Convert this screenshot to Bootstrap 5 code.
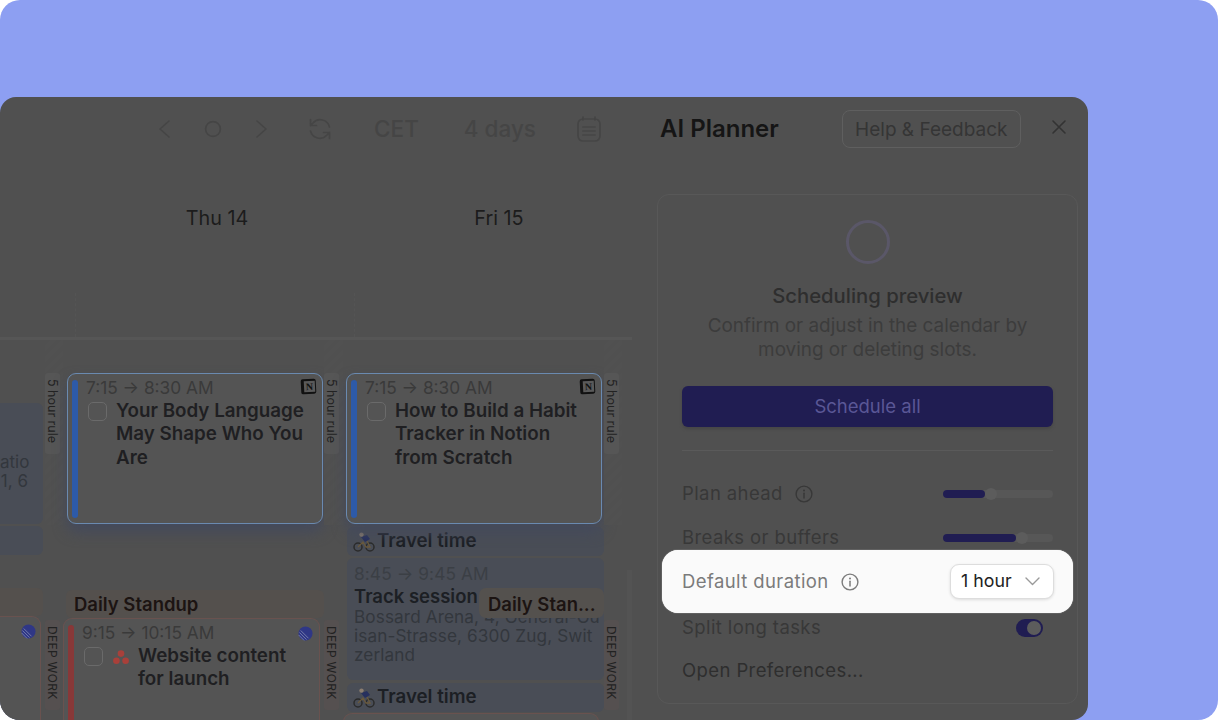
<!DOCTYPE html>
<html lang="en">
<head>
  <meta charset="UTF-8" />
  <title>AI Planner</title>
  <link href="https://cdn.jsdelivr.net/npm/bootstrap@5.3.3/dist/css/bootstrap.min.css" rel="stylesheet">
  <style>
    body{margin:0;background:#fff;font-family:"Inter","Liberation Sans",sans-serif;color:#1f1f1f;overflow:hidden}
    .frame{width:1218px;height:720px;background:#8d9ff2;border-radius:20px;padding-top:97px;overflow:hidden}
    .win{width:1088px;height:623px;background:#505050;border-radius:16px 16px 16px 0;overflow:hidden;display:flex}

    /* ---------- calendar side ---------- */
    .cal{width:632px;flex:none;position:relative}
    .topbar{height:64px;color:#454545}
    .topbar svg{display:block;flex:none}
    .tb-txt{font-size:22.5px;font-weight:500;line-height:1}
    .dayrow{height:66px;padding-top:48px;font-size:19.8px;line-height:1;color:#1c1c1c}
    .dayrow span{position:absolute;transform:translateX(-50%)}
    .allday{height:113px;border-bottom:3px solid #565656;display:flex}
    .dash{width:0;height:44px;margin-top:66px;border-left:1px dashed #545454}
    .grid-cols{display:grid;grid-template-columns:45px 18px 261px 19px 261px 18px 10px;height:380px}
    .cell{display:flex;flex-direction:column;min-width:0;position:relative}
    .strip{padding-top:33px;background:repeating-linear-gradient(135deg,#505050 0 4px,#515151 4px 8px) no-repeat 0 0/100% 185px}
    .tag{width:15px;writing-mode:vertical-rl;background:#565656;font-size:12.5px;line-height:15px;color:#222;border-radius:3px;white-space:nowrap;padding-top:6px;text-align:left}
    .tag.rule{height:81px}
    .tag.deep{height:90px;margin-top:166px;font-size:12px;letter-spacing:.3px;background:#555050}

    .ev-blue{background:#494d56;border-radius:6px}
    .ev-tan{background:#54504d;border-radius:6px;font-size:18.5px;font-weight:600;line-height:28px;height:28px;color:#1c1412;padding-left:8px;white-space:nowrap}
    .task{background:#545454;position:relative;border-radius:9px;padding-left:18px}
    .task.bluecard{border:1.5px solid #6a8ab0;height:151px;box-shadow:0 8px 14px #444a5c}
    .task.redcard{border:1px solid #69524f;border-bottom:0;border-radius:9px 9px 0 0;flex:1}
    .bar-side{position:absolute;left:4px;top:6px;bottom:5px;width:6px;border-radius:3px;background:#2d5aa8}
    .redcard .bar-side{background:#883838;bottom:-5px}
    .t-time{font-size:17.3px;line-height:20px;color:#3a3a3a;padding-top:4px;white-space:nowrap}
    .t-row{display:flex;margin-top:1px}
    .chk{width:19px;height:19px;flex:none;border:1.5px solid #6a6a6a;border-radius:5px;margin:3px 9px 0 2px}
    .t-title{font-size:18.8px;font-weight:600;line-height:23.4px;color:#1f1f22;max-width:195px}
    .redcard .t-title{max-width:170px}
    .t-corner{position:absolute;right:6px;top:5px}
    .notion{width:15px;height:15px;background:#5a5a5a;border:solid #111;border-width:2px 1px 2px 3px;border-radius:2px;font:700 10px/11px "Liberation Serif",serif;text-align:center;color:#111;transform:rotate(-3deg)}
    .travel{height:29px;font-size:18.7px;font-weight:600;display:flex;align-items:center;gap:2px;padding-left:6px;color:#1c1f24;white-space:nowrap}
    .track{height:122px;padding:6px 7px;margin-top:2px;margin-bottom:3px;font-size:17.2px;letter-spacing:.1px;line-height:19.2px;color:#33373d;white-space:nowrap}
    .track .t-time{padding:0 0 1px;color:#3b3f45}
    .track b{display:block;font-size:18.5px;letter-spacing:0;line-height:22px;font-weight:600;color:#1c1f24}
    .pop-tan{position:absolute;left:136px;top:248px;width:125px;height:30px;background:#54514e;border-radius:7px;padding-left:9px;font-size:18.5px;font-weight:600;line-height:32px;color:#1c1412;white-space:nowrap}
    .leftcut{margin-right:1px}
    .scrollbit{position:absolute;right:0;top:473px;bottom:0;width:5px;background:#535353}

    /* ---------- planner side ---------- */
    .side{width:456px;flex:none;padding-left:25px}
    .side-head{height:64px}
    .side-head h1{font-size:24px;font-weight:600;margin:0;line-height:1;color:#151515}
    .help{font-size:19px;line-height:1;font-weight:400;color:#353535;border:1.5px solid #5f5f5f;border-radius:8px;padding:8px 12px;height:38px;width:179px;white-space:nowrap;margin-left:63px;background:transparent;display:flex;align-items:center;justify-content:center}
    .closex{margin:0 auto 4px 30px}
    .planel{width:421px;height:510px;margin-top:33px;background:transparent;border:1px solid #585858;border-radius:12px;padding:0 24px}
    .ring{width:44px;height:44px;border-radius:50%;border:3.5px solid #5a5768;margin:25px auto 0}
    .pv-title{font-size:20.3px;font-weight:500;line-height:24px;margin-top:20px;color:#2e2e2e}
    .pv-desc{font-size:18.9px;line-height:24.2px;color:#3c3c3c;margin-top:6px;margin-inline:-10px}
    .sched{background:#201d52;border:0;color:#5a5796;font-size:18.5px;height:41px;margin-top:24px;border-radius:6px;box-shadow:0 2px 3px #464646;padding:0}
    .rule-h{border-top:1px solid #5a5a5a;margin:23px 0 20px}
    .opt{height:44.3px;font-size:18.5px;letter-spacing:.4px;color:#383838}
    .opt svg{display:block;flex:none}
    .sl{width:110px;height:8px;background:#575757;border-radius:4px;position:relative;flex:none}
    .sl i{display:block;height:8px;background:#201d52;border-radius:4px}
    .sl u{position:absolute;top:-2px;width:12px;height:12px;border-radius:50%;background:#5c5c5c}
    .hilite{position:relative;z-index:2;margin:-10px -20px;height:63px;padding:0 19px 0 20px;background:#fafafa;border-radius:16px;color:#7b7b7b;box-shadow:0 0 1px #fff}
    .pick{width:104px;height:35px;background:#fff;border:1.5px solid #ddd;border-radius:9px;box-shadow:0 1px 3px rgba(0,0,0,.12);color:#222;font-size:17.8px;letter-spacing:0;padding:0 13px 0 10px;white-space:nowrap}
    .toggle{width:27px;height:18px;border-radius:9px;background:#201d52;padding:2px;margin-right:10px;display:flex;justify-content:flex-end}
    .toggle i{width:14px;height:14px;border-radius:50%;background:#5c5c5c;display:block}
  </style>
</head>
<body>
<svg width="0" height="0" class="d-block">
  <symbol id="ico-info" viewBox="0 0 18 18"><circle cx="9" cy="9" r="7.9" fill="none" stroke="currentColor" stroke-width="1.4"/><circle cx="9" cy="5.6" r="1" fill="currentColor"/><path d="M9 8.2v4.8" stroke="currentColor" stroke-width="1.5" stroke-linecap="round"/></symbol>
  <symbol id="ico-linear" viewBox="0 0 16 16"><circle cx="8" cy="8" r="7.5" fill="#2f3786"/><path d="M.6 9.5l5.9 5.9M1.5 6.9l7.6 7.6M2.9 4.8l8.3 8.3" stroke="#7f86b0" stroke-width=".9"/></symbol>
  <symbol id="ico-bike" viewBox="0 0 22 20"><circle cx="5" cy="15" r="4" fill="none" stroke="#2b2b2b" stroke-width="1.5"/><circle cx="17" cy="15" r="4" fill="none" stroke="#2b2b2b" stroke-width="1.5"/><path d="M5 15l5-5 3 5h4l-3-6" fill="none" stroke="#6b5a3c" stroke-width="1.3"/><path d="M8 5l6-2 3 4-5 3z" fill="#27305e"/><circle cx="8.5" cy="2.6" r="2.2" fill="#8b7d70"/></symbol>
</svg>
<div class="frame">
  <div class="win">
    <!-- Calendar -->
    <section class="cal">
      <div class="topbar d-flex align-items-center">
        <svg class="ms-auto" width="14" height="20" viewBox="0 0 14 20" style="margin-right:33px"><path d="M12 2L3 10l9 8" fill="none" stroke="currentColor" stroke-width="1.6" stroke-linecap="round" stroke-linejoin="round"/></svg>
        <svg width="18" height="18" viewBox="0 0 18 18" style="margin-right:33px"><circle cx="9" cy="9" r="7.4" fill="none" stroke="currentColor" stroke-width="1.7"/></svg>
        <svg width="14" height="20" viewBox="0 0 14 20" style="margin-right:39px"><path d="M2 2l9 8-9 8" fill="none" stroke="currentColor" stroke-width="1.6" stroke-linecap="round" stroke-linejoin="round"/></svg>
        <svg width="24" height="24" viewBox="0 0 24 24" style="margin-right:42px"><path d="M21.5 10A9.6 9.6 0 0 0 5 6L2.5 8.6M2.5 2.5v6h6M2.5 14A9.6 9.6 0 0 0 19 18l2.5-2.6M21.5 21.5v-6h-6" fill="none" stroke="currentColor" stroke-width="1.7" stroke-linecap="round" stroke-linejoin="round"/></svg>
        <span class="tb-txt" style="margin-right:45px">CET</span>
        <span class="tb-txt" style="margin-right:40px">4 days</span>
        <svg width="26" height="28" viewBox="0 0 26 28" style="margin-right:30px"><rect x="2" y="4" width="22" height="22" rx="5" fill="none" stroke="currentColor" stroke-width="1.7"/><path d="M7 2v3M19 2v3M7 12h12M7 16h12M7 20h12" stroke="currentColor" stroke-width="1.7" stroke-linecap="round"/></svg>
      </div>
      <div class="dayrow"><span style="left:217px">Thu 14</span><span style="left:499px">Fri 15</span></div>
      <div class="allday"><div class="dash" style="margin-left:75px"></div><div class="dash" style="margin-left:278px"></div></div>

      <div class="grid-cols">
        <!-- partial Wed column -->
        <div class="cell leftcut text-end">
          <div class="ev-blue" style="height:121px;margin-top:63px;margin-right:1px;border-radius:0 6px 6px 0;font-size:17px;line-height:19px;color:#33373d;padding:50px 15px 0 0">atio<br>1, 6</div>
          <div class="ev-blue" style="height:29px;margin-top:2px;margin-right:1px;border-radius:0 6px 6px 0"></div>
          <div class="ev-tan" style="margin-top:33px;border-radius:0 6px 6px 0;margin-right:1px"></div>
          <div class="task redcard" style="border-left:0;border-radius:0 9px 0 0;margin-right:3px"><svg class="t-corner" width="15" height="15" style="right:4px;top:7px"><use href="#ico-linear"/></svg></div>
        </div>
        <div class="cell strip"><div class="tag rule">5 hour rule</div><div class="tag deep">DEEP WORK</div></div>

        <!-- Thu 14 -->
        <div class="cell">
          <div class="task bluecard" style="margin:33px 1px 0 4px">
            <span class="bar-side"></span>
            <div class="t-corner notion">N</div>
            <div class="t-time">7:15 → 8:30 AM</div>
            <div class="t-row"><span class="chk"></span><div class="t-title">Your Body Language May Shape Who You Are</div></div>
          </div>
          <div class="ev-tan" style="margin:66px 0 0 3px">Daily Standup</div>
          <div class="task redcard" style="margin-right:4px">
            <span class="bar-side"></span>
            <svg class="t-corner" width="15" height="15" style="top:7px"><use href="#ico-linear"/></svg>
            <div class="t-time">9:15 → 10:15 AM</div>
            <div class="t-row">
              <span class="chk"></span>
              <svg width="16" height="15" viewBox="0 0 16 15" style="flex:none;margin:6px 9px 0 1px"><circle cx="8" cy="3.6" r="3.3" fill="#a8403a"/><circle cx="3.4" cy="10.8" r="3.3" fill="#a8403a"/><circle cx="12.6" cy="10.8" r="3.3" fill="#a8403a"/></svg>
              <div class="t-title">Website content for launch</div>
            </div>
          </div>
        </div>
        <div class="cell strip"><div class="tag rule">5 hour rule</div><div class="tag deep">DEEP WORK</div></div>

        <!-- Fri 15 -->
        <div class="cell">
          <div class="task bluecard" style="margin:33px 2px 0 3px">
            <span class="bar-side"></span>
            <div class="t-corner notion">N</div>
            <div class="t-time">7:15 → 8:30 AM</div>
            <div class="t-row"><span class="chk"></span><div class="t-title">How to Build a Habit Tracker in Notion from Scratch</div></div>
          </div>
          <div class="ev-blue travel" style="margin:3px 0 0 4px"><svg width="22" height="20"><use href="#ico-bike"/></svg>Travel time</div>
          <div class="ev-blue track" style="margin-left:4px">
            <div class="t-time">8:45 → 9:45 AM</div>
            <b>Track session</b>
            Bossard Arena, 4, General-Gu<br>isan-Strasse, 6300 Zug, Swit<br>zerland
          </div>
          <div class="ev-blue travel" style="margin-left:4px"><svg width="22" height="20"><use href="#ico-bike"/></svg>Travel time</div>
          <div class="task redcard" style="margin:1px 5px 0 0"><span class="bar-side"></span><div class="t-time">10 → 11 AM</div></div>
          <div class="pop-tan">Daily Stan...</div>
        </div>
        <div class="cell strip"><div class="tag rule">5 hour rule</div><div class="tag deep">DEEP WORK</div></div>
        <div class="cell"></div>
      </div>
      <div class="scrollbit"></div>
    </section>

    <!-- Planner -->
    <aside class="side">
      <div class="side-head d-flex align-items-center">
        <h1 style="margin-left:3px">AI Planner</h1>
        <button class="help btn">Help &amp; Feedback</button>
        <svg class="closex" width="16" height="16" viewBox="0 0 16 16"><path d="M2 2l12 12M14 2L2 14" stroke="#333" stroke-width="1.6" stroke-linecap="round"/></svg>
      </div>
      <div class="card planel">
        <div class="ring"></div>
        <div class="pv-title text-center">Scheduling preview</div>
        <div class="pv-desc text-center">Confirm or adjust in the calendar by<br>moving or deleting slots.</div>
        <button class="btn btn-primary sched w-100">Schedule all</button>
        <div class="rule-h"></div>
        <div class="opt d-flex align-items-center justify-content-between">
          <span class="d-flex align-items-center gap-2">Plan ahead <svg class="ms-1" width="18" height="18"><use href="#ico-info"/></svg></span>
          <div class="sl"><i style="width:42px"></i><u style="left:42px"></u></div>
        </div>
        <div class="opt d-flex align-items-center justify-content-between">
          <span>Breaks or buffers</span>
          <div class="sl"><i style="width:73px"></i><u style="left:73px"></u></div>
        </div>
        <div class="opt hilite d-flex align-items-center justify-content-between">
          <span class="d-flex align-items-center gap-2">Default duration <svg class="ms-1" width="18" height="18"><use href="#ico-info"/></svg></span>
          <div class="pick d-flex align-items-center justify-content-between">1 hour
            <svg width="15" height="9" viewBox="0 0 15 9"><path d="M1 1l6.5 6.5L14 1" fill="none" stroke="#9a9a9a" stroke-width="1.4" stroke-linecap="round" stroke-linejoin="round"/></svg>
          </div>
        </div>
        <div class="opt d-flex align-items-center justify-content-between mt-1" style="height:42px">
          <span>Split long tasks</span>
          <div class="toggle"><i></i></div>
        </div>
        <div class="opt d-flex align-items-center" style="color:#2e2e2e">Open Preferences...</div>
      </div>
    </aside>
  </div>
</div>
<script src="https://cdn.jsdelivr.net/npm/bootstrap@5.3.3/dist/js/bootstrap.bundle.min.js"></script>
</body>
</html>
